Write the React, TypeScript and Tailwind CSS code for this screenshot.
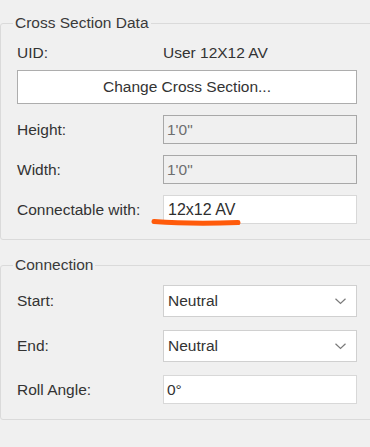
import React from "react";

const font = { fontFamily: '"Liberation Sans", Arial, sans-serif' };

const Chevron = () => (
  <svg width="11" height="7" viewBox="0 0 11 7" className="shrink-0">
    <path d="M0.5 0.8 L5.5 5.5 L10.5 0.8" fill="none" stroke="#7a7a7a" strokeWidth="1.2" />
  </svg>
);

function Row({ label, children, className = "" }: { label: string; children: React.ReactNode; className?: string }) {
  return (
    <div className={`flex items-center ${className}`}>
      <span className="w-[146px] shrink-0">{label}</span>
      {children}
    </div>
  );
}

export default function App() {
  return (
    <div
      className="w-[370px] h-[447px] overflow-hidden bg-[#f0f0f0] text-[15.5px] text-[#333333]"
      style={font}
    >
      <fieldset className="relative mt-[13px] w-[376px] border border-[#dadada] rounded-[3px]">
        <legend className="ml-[12px] px-[2px] leading-[20px] text-[#3a3a3a]">Cross Section Data</legend>
        <div className="pl-[16px] pr-[18px] pt-[10px] pb-[15px]">
          <Row label="UID:" className="h-[20px]">
            <span>User 12X12 AV</span>
          </Row>
          <button className="mt-[7px] w-[340px] h-[34px] bg-white border border-[#adadad] text-center">
            Change Cross Section...
          </button>
          <Row label="Height:" className="mt-[11px]">
            <div className="w-[194px] h-[29px] border border-[#a8a8a8] bg-[#f0f0f0] px-[3px] flex items-center text-[#6e6e6e]">
              1'0"
            </div>
          </Row>
          <Row label="Width:" className="mt-[11px]">
            <div className="w-[194px] h-[29px] border border-[#a8a8a8] bg-[#f0f0f0] px-[3px] flex items-center text-[#6e6e6e]">
              1'0"
            </div>
          </Row>
          <Row label="Connectable with:" className="mt-[11px]">
            <div className="w-[194px] h-[29px] border border-[#d8d8d8] bg-white px-[4px] flex items-center text-[16px] text-[#2e2e2e]">
              12x12 AV
            </div>
          </Row>
        </div>
        <svg
          className="absolute left-[150px] top-[183px] pointer-events-none"
          width="92"
          height="12"
          viewBox="0 0 92 12"
        >
          <path d="M3 5.5 C 30 7.5, 60 7.5, 87 6.5" fill="none" stroke="#ff5a0a" strokeWidth="5" strokeLinecap="round" />
        </svg>
      </fieldset>

      <fieldset className="mt-[15px] w-[376px] border border-[#dadada] rounded-[3px]">
        <legend className="ml-[12px] px-[2px] leading-[20px] text-[#3a3a3a]">Connection</legend>
        <div className="pl-[16px] pr-[18px] pt-[10px] pb-[15px]">
          <Row label="Start:">
            <div className="w-[194px] h-[32px] border border-[#d0d0d0] bg-white pl-[4px] pr-[10px] flex items-center justify-between">
              <span>Neutral</span>
              <Chevron />
            </div>
          </Row>
          <Row label="End:" className="mt-[13px]">
            <div className="w-[194px] h-[32px] border border-[#d0d0d0] bg-white pl-[4px] pr-[10px] flex items-center justify-between">
              <span>Neutral</span>
              <Chevron />
            </div>
          </Row>
          <Row label="Roll Angle:" className="mt-[13px]">
            <div className="w-[194px] h-[29px] border border-[#d8d8d8] bg-white px-[3px] flex items-center">
              0°
            </div>
          </Row>
        </div>
      </fieldset>
    </div>
  );
}
